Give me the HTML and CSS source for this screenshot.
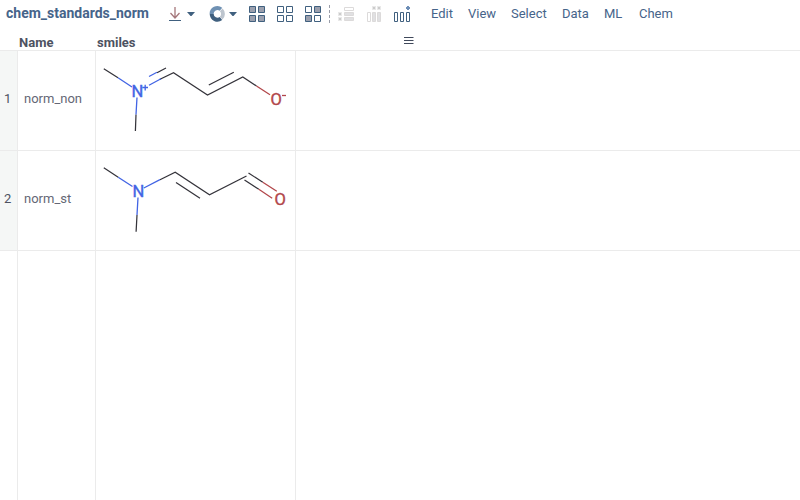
FILE: index.html
```
<!DOCTYPE html>
<html lang="en">
<head>
<meta charset="utf-8">
<title>chem_standards_norm</title>
<link rel="stylesheet" href="styles.css">
</head>
<body>
<header class="toolbar">
  <h1 class="title">chem_standards_norm</h1>
  <div class="tools">
    <svg class="icon save" width="28" height="28" viewBox="0 0 28 28"><path d="M2 20.5H14" class="line"/><path d="M8 7V18M3.5 13L8 18L12.5 13" class="arrow"/><path d="M20 12H28L24.5 16H23.5Z" class="solid"/></svg>
    <svg class="icon ring" width="30" height="28" viewBox="0 0 30 28"><path d="M3.6 14A5.8 5.8 0 0 1 13 9.3" class="arc-top"/><path d="M3.7 14A5.8 5.8 0 0 0 13 18.5" class="arc-bottom"/><path d="M13.3 9.8A5.8 5.8 0 0 1 13.2 18.1" class="arc-right"/><path d="M21 12H29L25.5 16H24.5Z" class="solid"/></svg>
    <svg class="icon" width="28" height="28" viewBox="0 0 28 28"><g class="boxes"><path class="full" d="M1.5 6.5h6v6h-6zM10.5 6.5h6v6h-6zM1.5 15.5h6v6h-6zM10.5 15.5h6v6h-6z"/></g></svg>
    <svg class="icon" width="28" height="28" viewBox="0 0 28 28"><g class="boxes"><path d="M1.5 6.5h6v6h-6zM10.5 6.5h6v6h-6zM1.5 15.5h6v6h-6zM10.5 15.5h6v6h-6z"/></g></svg>
    <svg class="icon" width="25" height="28" viewBox="0 0 25 28"><g class="boxes"><path d="M1.5 6.5h6v6h-6zM10.5 15.5h6v6h-6z"/><path class="full" d="M10.5 6.5h6v6h-6zM1.5 15.5h6v6h-6z"/></g></svg>
    <span class="divider"></span>
    <svg class="icon rows" width="17" height="28" viewBox="0 0 17 28"><path class="pale" d="M6.5 7.5h9v3h-9z"/><path class="pale full" d="M6.5 12.5h9v3h-9zM6.5 17.5h9v3h-9z"/><path class="pale-dot" d="M0 12h4v4H0zM0 17h4v4H0z"/><path class="dot-core" d="M1 13h2v2H1zM1 18h2v2H1z"/></svg>
    <svg class="icon cols" width="15" height="28" viewBox="0 0 15 28"><path class="pale" d="M.5 12.5h3v9h-3z"/><path class="pale full" d="M5.5 12.5h3v9h-3zM10.5 12.5h3v9h-3z"/><path class="pale-dot" d="M5 6h4v4H5zM10 6h4v4h-4z"/><path class="dot-core" d="M6 7h2v2H6zM11 7h2v2h-2z"/></svg>
    <svg class="icon stats" width="17" height="28" viewBox="0 0 17 28"><g class="boxes"><path d="M.5 12.5h3v9h-3zM6.5 12.5h3v9h-3zM12.5 12.5h3v9h-3z"/></g><path d="M13 6h2v1h1v2h-1v1h-2v-1h-1V7h1z" class="blue-dot"/></svg>
  </div>
  <nav class="menu"><a class="edit">Edit</a><a class="view">View</a><a class="select">Select</a><a class="data">Data</a><a class="ml">ML</a><a>Chem</a></nav>
</header>
<main class="grid">
  <div class="row head">
    <div class="num"></div><div class="name">Name</div><div class="smiles">smiles</div>
    <div class="rest"><svg class="burger" width="10" height="10" viewBox="0 0 10 10"><path d="M0 1.5H9.5M0 4.5H9.5M0 7.5H9.5"/></svg></div>
  </div>
  <div class="row body">
    <div class="num">1</div><div class="name">norm_non</div>
    <div class="smiles"><svg width="199" height="99" viewBox="96 51 199 99">
      <g class="carbon"><path d="M103.8 68.8L118 77.8M136 114.5L135.4 131M157 72.8L166 68M159.5 79.5L173.5 72.8L207.5 95L242.8 77L256.5 86M208.8 85L233.8 72.3"/></g>
      <path class="nitrogen" d="M118 77.8L132 87M137 97.5L136 114.5M149 76.5L157 72.2M149 85.3L161 78.8"/>
      <path class="oxygen" d="M256.5 86L270 94.8"/>
      <text class="n" x="131.4" y="97">N</text><path class="nitrogen charge" d="M142.3 87.5H148M145.2 84.7V90.5"/>
      <text class="o" x="270.4" y="105">O</text><path class="oxygen" d="M282 95.5H286"/>
    </svg></div><div class="rest"></div>
  </div>
  <div class="row body">
    <div class="num">2</div><div class="name">norm_st</div>
    <div class="smiles"><svg width="199" height="99" viewBox="96 151 199 99">
      <g class="carbon"><path d="M103.8 167.8L118.2 177.2M137 215L136.1 231.8M160 179.7L175.2 172.2L209.5 194.7L246.5 176M176 182.5L200 198.3M248.5 173L262.8 182.3M244.5 180L258.8 189.3"/></g>
      <path class="nitrogen" d="M118.2 177.2L132.5 186.5M138 197.5L137 215M143.8 188L160 179.7"/>
      <path class="oxygen" d="M262.8 182.3L276.8 191.3M258.8 189.3L272.2 198.2"/>
      <text class="n" x="132.4" y="197">N</text><text class="o" x="274.6" y="205">O</text>
    </svg></div><div class="rest"></div>
  </div>
  <div class="row empty"><div class="num"></div><div class="name"></div><div class="smiles"></div><div class="rest"></div></div>
</main>
</body>
</html>
```
FILE: styles.css
```
* { box-sizing: border-box; }
body {
  margin: 0;
  height: 500px;
  overflow: hidden;
  display: flex;
  flex-direction: column;
  background: #fff;
  font: 13px/28px Roboto, sans-serif;
  color: #4d5261;
}
svg { display: block; flex: none; fill: none; }
.toolbar { display: flex; height: 28px; padding-left: 6px; color: #46648a; }
.title { width: 161px; margin: 0; font-size: 14px; font-weight: 700; line-height: 27px; white-space: nowrap; }
.tools { display: flex; width: 264px; }
.save { margin-right: 13px; }
.ring { margin-right: 10px; }
.divider { width: 1px; height: 18px; margin: 5px 8px 0 0; background: repeating-linear-gradient(#999da9 0 3px, transparent 3px 5px); }
.rows { margin-right: 12px; }
.cols { margin-right: 12px; }
.line { stroke: #40607f; }
.arrow { stroke: #a5777b; stroke-width: 1.3; }
.solid { fill: #40607f; }
.arc-top { stroke: #6f91b3; stroke-width: 4; }
.arc-bottom { stroke: #40607f; stroke-width: 4; }
.arc-right { stroke: #bdc5ce; stroke-width: 3.8; }
.boxes { stroke: #40607f; }
.full { fill: #9ba0ae; }
.pale { stroke: #dcdada; }
.pale.full { fill: #e0e0e2; }
.pale-dot { fill: #e9e9e9; }
.dot-core { fill: #ccc; }
.blue-dot { fill: #6e8fb7; }
.menu { display: flex; white-space: nowrap; }
.edit { width: 37px; }
.view { width: 43px; }
.select { width: 51px; }
.data { width: 42px; }
.ml { width: 35px; }
.grid { flex: 1; display: flex; flex-direction: column; }
.row { display: grid; grid-template-columns: 18px 78px 200px 1fr; border-bottom: 1px solid #ebebeb; }
.head { height: 23px; font-weight: 700; line-height: 29px; }
.head .name { padding-left: 1px; }
.head .smiles { padding-left: 1px; }
.head .rest { padding: 8px 0 0 108px; }
.burger { stroke: #40495b; stroke-width: 1.1; }
.body { height: 100px; line-height: 96px; }
.body > div, .empty > div { border-right: 1px solid #ebebeb; }
.body > .rest, .empty > .rest { border-right: 0; }
.body .num { background: #f5f7f6; padding-left: 4px; color: #4d5261; }
.body .name { padding-left: 6px; color: #646775; }
.empty { flex: 1; border-bottom: 0; }
.carbon { stroke: #35343b; stroke-width: 1.25; }
.nitrogen { stroke: #4264e4; stroke-width: 1.3; }
.oxygen { stroke: #b2474b; stroke-width: 1.3; }
.n, .o { font: 16.5px Roboto, sans-serif; stroke-width: .4; }
.n { fill: #4264e4; stroke: #4264e4; }
.o { fill: #b2474b; stroke: #b2474b; }
```
